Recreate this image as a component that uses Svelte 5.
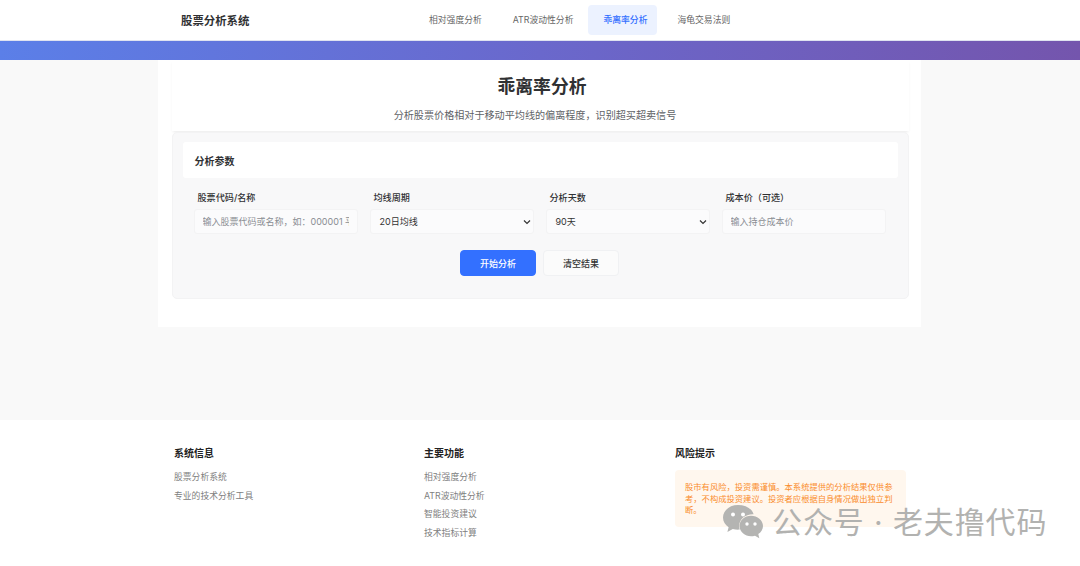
<script lang="ts">
	const navItems = [
		{ label: '相对强度分析', active: false },
		{ label: 'ATR波动性分析', active: false },
		{ label: '乖离率分析', active: true },
		{ label: '海龟交易法则', active: false }
	];
	const systemLinks = ['股票分析系统', '专业的技术分析工具'];
	const featureLinks = ['相对强度分析', 'ATR波动性分析', '智能投资建议', '技术指标计算'];
</script>

<div class="page">
	<header class="nav">
		<div class="brand">股票分析系统</div>
		<nav class="nav-menu">
			{#each navItems as item}
				<span class="nav-item" class:active={item.active}>{item.label}</span>
			{/each}
		</nav>
	</header>
	<div class="banner"></div>

	<main class="main">
		<div class="container">
			<section class="page-head">
				<h1>乖离率分析</h1>
				<p>分析股票价格相对于移动平均线的偏离程度，识别超买超卖信号</p>
			</section>

			<section class="panel">
				<div class="panel-head">分析参数</div>
				<div class="form-grid">
					<div class="field">
						<span class="label">股票代码/名称</span>
						<input class="control" placeholder="输入股票代码或名称，如：000001 平安银行" />
					</div>
					<div class="field">
						<span class="label">均线周期</span>
						<div class="control select">
							<span>20日均线</span>
							<svg width="8" height="6" viewBox="0 0 8 6"><path d="M1 1.500 4 4.500 7 1.500" fill="none" stroke="#333" stroke-width="1.2" /></svg>
						</div>
					</div>
					<div class="field">
						<span class="label">分析天数</span>
						<div class="control select">
							<span>90天</span>
							<svg width="8" height="6" viewBox="0 0 8 6"><path d="M1 1.500 4 4.500 7 1.500" fill="none" stroke="#333" stroke-width="1.2" /></svg>
						</div>
					</div>
					<div class="field">
						<span class="label">成本价（可选）</span>
						<input class="control" placeholder="输入持仓成本价" />
					</div>
				</div>
				<div class="actions">
					<button class="btn primary">开始分析</button>
					<button class="btn">清空结果</button>
				</div>
			</section>
		</div>
	</main>

	<footer class="footer">
		<div class="footer-col">
			<h4>系统信息</h4>
			{#each systemLinks as link}
				<div class="footer-link">{link}</div>
			{/each}
		</div>
		<div class="footer-col">
			<h4>主要功能</h4>
			{#each featureLinks as link}
				<div class="footer-link">{link}</div>
			{/each}
		</div>
		<div class="footer-col">
			<h4>风险提示</h4>
			<div class="risk">股市有风险，投资需谨慎。本系统提供的分析结果仅供参考，不构成投资建议。投资者应根据自身情况做出独立判断。</div>
		</div>
	</footer>

	<!-- watermark sits over the footer -->
	<div class="watermark">
		<svg width="42" height="36" viewBox="0 0 42 36">
			<path d="M16 1C7.500 1 1 6.600 1 13.500c0 4 2.200 7.400 5.600 9.700L5.400 28l5.400-3c1.600.4 3.300.7 5.200.7.600 0 1.200 0 1.800-.1-.4-1.200-.6-2.400-.6-3.700 0-6.600 6-11.700 13.400-11.700h1C30.200 4.700 23.700 1 16 1z" fill="#b4b4b2" />
			<path d="M41 22c0-5.800-5.600-10.300-12-10.300S17.500 16.200 17.500 22 23 32.300 29 32.300c1.300 0 2.700-.2 4-.6l4.300 2.600-1-4.300C39.200 28.100 41 25.200 41 22z" fill="#b4b4b2" />
			<circle cx="11" cy="10.500" r="2" fill="#fff" />
			<circle cx="21" cy="10.500" r="2" fill="#fff" />
			<circle cx="25" cy="20" r="1.700" fill="#fff" />
			<circle cx="33" cy="20" r="1.700" fill="#fff" />
		</svg>
		<span>公众号 · 老夫撸代码</span>
	</div>
</div>

<style>
	:global(body) {
		margin: 0;
		background: #fff;
	}
	.page {
		position: relative;
		width: 1080px;
		height: 566px;
		overflow: hidden;
		font-family: 'Inter', 'Noto Sans CJK SC', sans-serif;
		color: #303133;
	}
	.nav {
		height: 40px;
		background: #fff;
		display: flex;
		align-items: center;
		padding-left: 181px;
		border-bottom: 1px solid #dfe3f0;
	}
	.brand {
		width: 233px;
		font-size: 11.400px;
		font-weight: 700;
		color: #303133;
	}
	.nav-menu {
		display: flex;
		align-items: center;
	}
	.nav-item {
		display: block;
		padding: 0 15px;
		height: 30px;
		line-height: 30px;
		border-radius: 4px;
		font-size: 8.800px;
		color: #666;
		white-space: nowrap;
	}
	.nav-item:first-child {
		padding-right: 16px;
	}
	.nav-item.active {
		padding-right: 10px;
		margin-right: 5px;
		background: #ecf2ff;
		color: #3370ff;
		font-weight: 500;
	}
	.banner {
		height: 19px;
		background: linear-gradient(90deg, #5b7fe8 0%, #6a68cc 50%, #7455ad 100%);
	}
	.main {
		height: 360px;
		background: #f9f9f9;
		display: flex;
		justify-content: center;
	}
	.container {
		width: 763px;
		height: 267px;
		margin-left: -2px;
		padding: 0 12px 0 14px;
		box-sizing: border-box;
		background: #fff;
		display: flex;
		flex-direction: column;
	}
	.page-head {
		height: 71px;
		box-sizing: border-box;
		text-align: center;
		padding-top: 14px;
		box-shadow: 0 2px 3px -1px rgba(0, 0, 0, 0.09);
		background: #fff;
	}
	h1 {
		margin: 0;
		padding-left: 4px;
		font-size: 17.800px;
		line-height: 26px;
		font-weight: 700;
		color: #303133;
	}
	.page-head p {
		margin: 7px 0 0;
		padding-right: 10px;
		font-size: 10.100px;
		line-height: 16px;
		color: #606266;
	}
	.panel {
		height: 167px;
		box-sizing: border-box;
		margin-top: 1px;
		background: #f8f8f9;
		border: 1px solid #f3f3f4;
		border-radius: 5px;
		padding: 9px 10px 0;
		display: flex;
		flex-direction: column;
	}
	.panel-head {
		height: 36px;
		background: #fff;
		border-radius: 3px;
		padding-left: 12px;
		line-height: 38px;
		font-size: 10px;
		font-weight: 700;
		color: #303133;
		flex: none;
	}
	.form-grid {
		display: grid;
		grid-template-columns: repeat(4, 164px);
		column-gap: 12px;
		margin-top: 13px;
		padding-left: 11px;
	}
	.field {
		display: flex;
		flex-direction: column;
	}
	.label {
		font-size: 9.100px;
		line-height: 13px;
		color: #303133;
		padding-left: 4px;
		margin-bottom: 5px;
		font-weight: 500;
	}
	.control {
		box-sizing: border-box;
		height: 25px;
		width: 100%;
		border: 1px solid #f3f3f4;
		border-radius: 3px;
		background: #fbfbfc;
		padding: 0 8px;
		font: inherit;
		font-size: 9px;
		color: #333;
		outline: none;
	}
	.control::placeholder {
		color: #8a8d93;
		opacity: 1;
	}
	.select {
		display: flex;
		align-items: center;
		justify-content: space-between;
		padding: 0 2px 0 9px;
	}
	.actions {
		display: flex;
		justify-content: center;
		gap: 7px;
		margin-top: 16px;
		margin-left: -1px;
	}
	.btn {
		width: 76px;
		height: 26px;
		border-radius: 4px;
		border: 1px solid #f0f1f3;
		background: #fbfbfb;
		padding: 0;
		font: inherit;
		font-size: 9px;
		font-weight: 500;
		color: #333;
	}
	.btn.primary {
		background: #3370ff;
		border-color: #3370ff;
		color: #fff;
	}
	.footer {
		height: 146px;
		background: #fff;
		box-sizing: border-box;
		padding: 27px 0 0 174px;
		display: grid;
		grid-template-columns: 250px 251px 231px;
		align-items: start;
	}
	h4 {
		margin: 0 0 8px;
		font-size: 10px;
		line-height: 13px;
		font-weight: 700;
		color: #222;
	}
	.footer-link {
		font-size: 8.800px;
		line-height: 18.500px;
		color: #808080;
	}
	.risk {
		margin-top: 10px;
		box-sizing: border-box;
		height: 57px;
		padding: 12px 10px 0;
		background: #fff7ee;
		border-radius: 4px;
		font-size: 8.300px;
		line-height: 11.500px;
		color: #fa8c2c;
	}
	.watermark {
		position: absolute;
		left: 722px;
		top: 504px;
		display: flex;
		align-items: center;
		gap: 8px;
		color: #b2b2b0;
		font-size: 30px;
		line-height: 36px;
		letter-spacing: 0.900px;
		white-space: nowrap;
	}
</style>
